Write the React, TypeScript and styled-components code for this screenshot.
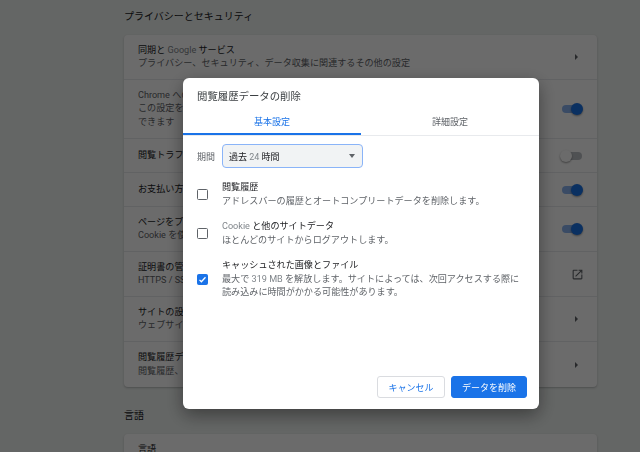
import React from "react";
import styled, { createGlobalStyle } from "styled-components";

const GlobalStyle = createGlobalStyle`
  html, body {
    margin: 0;
    padding: 0;
    height: 452px;
    overflow: hidden;
    background: #eef2f0;
    font-family: Roboto, "Noto Sans CJK JP", sans-serif;
  }
`;

const Page = styled.div`
  width: 473px;
  margin-left: 124px;
  padding-top: 10px;
`;

const Heading = styled.h2`
  margin: 0;
  height: 25px;
  line-height: 14px;
  font-size: 10px;
  font-weight: 400;
  color: #202124;
`;

const Card = styled.div`
  background: #fff;
  border-radius: 4px;
  box-shadow: 0 1px 2px rgba(60, 64, 67, 0.3);
  margin-bottom: 22px;
`;

const Row = styled.div<{ $height: number }>`
  height: ${(p) => p.$height}px;
  box-sizing: border-box;
  padding: 0 14px;
  display: flex;
  align-items: center;
  justify-content: space-between;
  border-top: 1px solid #e8eaed;
  font-size: 9.1px;
  line-height: 13.5px;
  color: #5f6368;

  &:first-child {
    border-top: none;
  }
`;

const RowText = styled.div`
  flex: 1;
  white-space: nowrap;
  overflow: hidden;
`;

const RowTitle = styled.div<{ $muted?: boolean }>`
  color: ${(p) => (p.$muted ? "#5f6368" : "#202124")};
`;

const Latin = styled.span`
  color: #80868b;
`;

const Track = styled.span<{ $on: boolean }>`
  position: relative;
  display: block;
  width: 19px;
  height: 8px;
  margin-right: ${(p) => (p.$on ? 2 : 1)}px;
  border-radius: 4px;
  background: ${(p) => (p.$on ? "#8ab4f0" : "#bdc1c6")};
`;

const Thumb = styled.span<{ $on: boolean }>`
  position: absolute;
  top: -2px;
  ${(p) => (p.$on ? "right: -2px;" : "left: -3px;")}
  width: 12px;
  height: 12px;
  border-radius: 50%;
  background: ${(p) => (p.$on ? "#1a73e8" : "#fff")};
  box-shadow: 0 1px 2px rgba(0, 0, 0, 0.4);
`;

const Arrow = styled.span`
  display: block;
  margin-right: 5px;
  width: 0;
  height: 0;
  border-left: 3px solid #5f6368;
  border-top: 3px solid transparent;
  border-bottom: 3px solid transparent;
`;

const ExternalSvg = styled.svg`
  margin-right: -1px;
  fill: #5f6368;
`;

const Overlay = styled.div`
  position: fixed;
  inset: 0;
  background: rgba(0, 0, 0, 0.58);
  padding: 78px 0 0 183px;
`;

const Dialog = styled.div`
  width: 356px;
  height: 331px;
  display: flex;
  flex-direction: column;
  background: #fff;
  border-radius: 6px;
  box-shadow: 0 6px 18px rgba(0, 0, 0, 0.4);
`;

const DialogTitle = styled.div`
  padding: 11px 14px 0;
  height: 22px;
  line-height: 15px;
  font-size: 10.4px;
  color: #3c4043;
`;

const Tabs = styled.div`
  display: flex;
  height: 24px;
  border-bottom: 1px solid #e8eaed;
`;

const Tab = styled.div<{ $active?: boolean }>`
  flex: 1;
  height: 24px;
  box-sizing: border-box;
  padding-top: 4px;
  line-height: 14px;
  text-align: center;
  font-size: 9px;
  color: ${(p) => (p.$active ? "#1a73e8" : "#5f6368")};
  border-bottom: 2px solid ${(p) => (p.$active ? "#1a73e8" : "transparent")};
`;

const Body = styled.div`
  flex: 1;
  padding: 8px 14px 0;
`;

const PeriodRow = styled.div`
  display: flex;
  align-items: center;
  gap: 7px;
  font-size: 9px;
  color: #5f6368;
  margin-bottom: 13px;
`;

const Select = styled.div`
  width: 141px;
  height: 24px;
  box-sizing: border-box;
  padding: 0 7px 0 6px;
  display: flex;
  align-items: center;
  justify-content: space-between;
  background: #f1f3f4;
  border: 1px solid #8ab4f8;
  border-radius: 4px;
  color: #202124;
`;

const Caret = styled.span`
  width: 0;
  height: 0;
  border-top: 4px solid #5f6368;
  border-left: 3.5px solid transparent;
  border-right: 3.5px solid transparent;
`;

const Option = styled.div`
  display: flex;
  align-items: center;
  gap: 14px;
  margin-bottom: 12px;
  font-size: 9.1px;
  line-height: 13.5px;
  color: #5f6368;
`;

const Box = styled.span<{ $checked?: boolean }>`
  flex: none;
  width: 11px;
  height: 11px;
  box-sizing: border-box;
  display: flex;
  align-items: center;
  justify-content: center;
  border-radius: 1.5px;
  border: 1px solid ${(p) => (p.$checked ? "#1a73e8" : "#5f6368")};
  background: ${(p) => (p.$checked ? "#1a73e8" : "#fff")};
`;

const OptionTitle = styled.div`
  color: #202124;
`;

const Footer = styled.div`
  display: flex;
  justify-content: flex-end;
  gap: 6px;
  padding: 0 12px 11px;
`;

const Button = styled.button<{ $primary?: boolean }>`
  height: 22px;
  box-sizing: border-box;
  padding: 0;
  width: ${(p) => (p.$primary ? 76 : 68)}px;
  font: inherit;
  font-size: 9px;
  border-radius: 3px;
  color: ${(p) => (p.$primary ? "#fff" : "#1a73e8")};
  background: ${(p) => (p.$primary ? "#1a73e8" : "#fff")};
  border: 1px solid ${(p) => (p.$primary ? "#1a73e8" : "#dadce0")};
`;

const Toggle = ({ on }: { on: boolean }) => (
  <Track $on={on}>
    <Thumb $on={on} />
  </Track>
);

const ExternalIcon = () => (
  <ExternalSvg width="13" height="13" viewBox="0 0 24 24">
    <path d="M19 19H5V5h7V3H5a2 2 0 0 0-2 2v14a2 2 0 0 0 2 2h14c1.1 0 2-.9 2-2v-7h-2v7zM14 3v2h3.59l-9.83 9.83 1.41 1.41L19 6.41V10h2V3h-7z" />
  </ExternalSvg>
);

export default function App() {
  return (
    <>
      <GlobalStyle />
      <Page>
        <Heading>プライバシーとセキュリティ</Heading>
        <Card>
          <Row $height={44}>
            <RowText>
              <RowTitle>同期と <Latin>Google</Latin> サービス</RowTitle>
              プライバシー、セキュリティ、データ収集に関連するその他の設定
            </RowText>
            <Arrow />
          </Row>
          <Row $height={59}>
            <RowText>
              <RowTitle $muted>Chrome へのログインを許可する</RowTitle>
              この設定をオフにすると、Chrome にログインせずに
              <br />
              できます
            </RowText>
            <Toggle on />
          </Row>
          <Row $height={34}>
            <RowText>
              <RowTitle>閲覧トラフィックと一緒に</RowTitle>
            </RowText>
            <Toggle on={false} />
          </Row>
          <Row $height={34}>
            <RowText>
              <RowTitle>お支払い方法を保存</RowTitle>
            </RowText>
            <Toggle on />
          </Row>
          <Row $height={45}>
            <RowText>
              <RowTitle>ページをプリロード</RowTitle>
              Cookie を使用
            </RowText>
            <Toggle on />
          </Row>
          <Row $height={45}>
            <RowText>
              <RowTitle>証明書の管理</RowTitle>
              HTTPS / SSL
            </RowText>
            <ExternalIcon />
          </Row>
          <Row $height={45}>
            <RowText>
              <RowTitle>サイトの設定</RowTitle>
              ウェブサイト
            </RowText>
            <Arrow />
          </Row>
          <Row $height={46}>
            <RowText>
              <RowTitle>閲覧履歴データの削除</RowTitle>
              閲覧履歴、
            </RowText>
            <Arrow />
          </Row>
        </Card>
        <Heading>言語</Heading>
        <Card>
          <Row $height={44}>
            <RowText>
              <RowTitle>言語</RowTitle>
              &nbsp;
            </RowText>
          </Row>
        </Card>
      </Page>
      <Overlay>
        <Dialog>
          <DialogTitle>閲覧履歴データの削除</DialogTitle>
          <Tabs>
            <Tab $active>基本設定</Tab>
            <Tab>詳細設定</Tab>
          </Tabs>
          <Body>
            <PeriodRow>
              <span>期間</span>
              <Select>
                <span>過去 <Latin>24</Latin> 時間</span>
                <Caret />
              </Select>
            </PeriodRow>
            <Option>
              <Box />
              <div>
                <OptionTitle>閲覧履歴</OptionTitle>
                アドレスバーの履歴とオートコンプリートデータを削除します。
              </div>
            </Option>
            <Option>
              <Box />
              <div>
                <OptionTitle><Latin>Cookie</Latin> と他のサイトデータ</OptionTitle>
                ほとんどのサイトからログアウトします。
              </div>
            </Option>
            <Option>
              <Box $checked>
                <svg width="9" height="9" viewBox="0 0 24 24" fill="none" stroke="#fff" strokeWidth="3.5">
                  <path d="M4 13l5 5L20 6" />
                </svg>
              </Box>
              <div>
                <OptionTitle>キャッシュされた画像とファイル</OptionTitle>
                最大で <Latin>319 MB</Latin> を解放します。サイトによっては、次回アクセスする際に
                <br />
                読み込みに時間がかかる可能性があります。
              </div>
            </Option>
          </Body>
          <Footer>
            <Button>キャンセル</Button>
            <Button $primary>データを削除</Button>
          </Footer>
        </Dialog>
      </Overlay>
    </>
  );
}
